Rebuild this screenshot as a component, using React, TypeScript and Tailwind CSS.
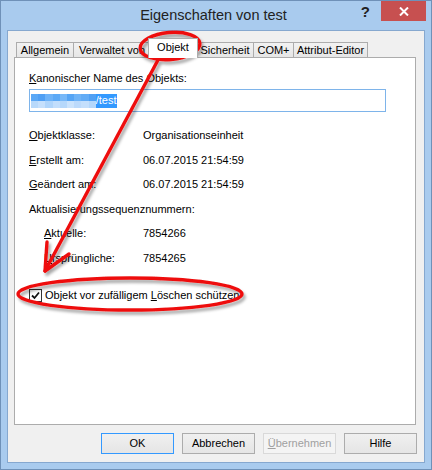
import React from "react";

const Key = ({ c }: { c: string }) => <span className="underline underline-offset-[1px]">{c}</span>;

const tabs = [
  { label: "Allgemein", w: "w-[57px]" },
  { label: "Verwaltet von", w: "w-[77px]" },
  { label: "Objekt", w: "w-[46px]", active: true },
  { label: "Sicherheit", w: "w-[57px]" },
  { label: "COM+", w: "w-[40px]" },
  { label: "Attribut-Editor", w: "w-[75px]", last: true },
];

const blurTop = ["#5aa8f6", "#4f9ff4", "#6cb2f8", "#5ba9f6", "#77b8f8", "#56a5f5", "#6eb3f7", "#62acf6", "#4fa0f4"];
const blurBottom = ["#b8d9fb", "#c6e0fc", "#b0d5fb", "#c2defc", "#b6d8fb", "#cbe3fc", "#bcdafb", "#c4dffc", "#b4d7fb"];

function Row({ label, value, indent }: { label: React.ReactNode; value: string; indent?: boolean }) {
  return (
    <div className={`flex items-center h-[24.5px] ${indent ? "pl-[15px]" : ""}`}>
      <div className={indent ? "w-[99px]" : "w-[114px]"}>{label}</div>
      <div>{value}</div>
    </div>
  );
}

export default function App() {
  return (
    <div className="relative w-[432px] h-[470px] bg-[#a9cbee] border border-[#6f91b8] flex flex-col font-['Liberation_Sans',Arial,sans-serif] text-[11px] text-black select-none">
      {/* Title bar */}
      <div className="h-[29px] grid grid-cols-[1fr_auto_1fr] pr-[5px]">
        <div />
        <div className="flex items-center pt-[1px] text-[14.5px] text-[#222]">Eigenschaften von test</div>
        <div className="flex justify-end items-start">
          <span className="mt-[2px] mr-[11px] text-[15px] font-bold text-[#222] leading-[18px]">?</span>
          <div className="w-[45px] h-[20px] bg-[#c75050] flex items-center justify-center">
            <svg width="10" height="9" viewBox="0 0 10 9">
              <path d="M1 0.5 L9 8.5 M9 0.5 L1 8.5" stroke="#fff" strokeWidth="2" />
            </svg>
          </div>
        </div>
      </div>

      {/* Client area */}
      <div className="mx-[6px] border border-[#86a8cf] bg-[#f0f0f0] h-[433px] flex flex-col">
        <div className="pl-[6px] pr-[8px] pt-[7px]">
          {/* Tabs */}
          <div className="flex items-end h-[19px] pl-[2px]">
            {tabs.map((t) =>
              t.active ? (
                <div
                  key={t.label}
                  className="relative z-10 w-[50px] h-[20px] -mb-px -mx-[2px] bg-white border border-b-0 border-[#acacac] flex items-center justify-center pb-[2px]"
                >
                  {t.label}
                </div>
              ) : (
                <div
                  key={t.label}
                  className={`${t.w} h-[15px] border-t border-l ${t.last ? "border-r" : ""} border-[#acacac] bg-gradient-to-b from-[#f2f2f2] to-[#e6e6e6] flex items-center justify-center leading-none`}
                >
                  {t.label}
                </div>
              )
            )}
          </div>

          {/* Panel */}
          <div className="h-[368px] border border-[#acacac] bg-white pl-[14px] pt-[13px]">
            <div className="h-[14px] flex items-center">
              <span>
                <Key c="K" />anonischer Name des Objekts:
              </span>
            </div>
            <div className="mt-[4px] w-[357px] h-[23px] border border-[#7eb4ea] flex items-center pl-[1px]">
              <div className="flex flex-col">
                <div className="flex">
                  {blurTop.map((c, i) => (
                    <div key={i} className="w-[7.2px] h-[7px]" style={{ background: c }} />
                  ))}
                </div>
                <div className="flex">
                  {blurBottom.map((c, i) => (
                    <div key={i} className="w-[7.2px] h-[7px]" style={{ background: c }} />
                  ))}
                </div>
              </div>
              <div className="h-[14px] bg-[#3399ff] text-white flex items-center pr-[1px]">/test</div>
            </div>

            <div className="mt-[11px]">
              <Row label={<><Key c="O" />bjektklasse:</>} value="Organisationseinheit" />
              <Row label={<><Key c="E" />rstellt am:</>} value="06.07.2015 21:54:59" />
              <Row label={<><Key c="G" />eändert am:</>} value="06.07.2015 21:54:59" />
              <div className="flex items-center h-[24.5px]">Aktualisierungssequenznummern:</div>
              <Row indent label={<><Key c="A" />ktuelle:</>} value="7854266" />
              <Row indent label={<><Key c="U" />rsprüngliche:</>} value="7854265" />
            </div>

            <div className="mt-[18px] flex items-center h-[14px]">
              <div className="w-[13px] h-[13px] border border-[#333] bg-white flex items-center justify-center mr-[3px]">
                <svg width="9" height="9" viewBox="0 0 9 9">
                  <path d="M1 4.5 L3.5 7 L8 1.5" fill="none" stroke="#111" strokeWidth="1.8" />
                </svg>
              </div>
              <span>
                Objekt vor zufälligem <Key c="L" />öschen schützen
              </span>
            </div>
          </div>
        </div>

        {/* Buttons */}
        <div className="flex justify-end gap-[8px] pr-[7px] mt-[8px]">
          <button className="w-[73px] h-[21px] border border-[#3399ff] bg-gradient-to-b from-[#f0f0f0] to-[#e5e5e5]">OK</button>
          <button className="w-[73px] h-[21px] border border-[#acacac] bg-gradient-to-b from-[#f0f0f0] to-[#e5e5e5]">Abbrechen</button>
          <button className="w-[73px] h-[21px] border border-[#d9d9d9] bg-[#f4f4f4] text-[#a0a0a0]">
            <Key c="Ü" />bernehmen
          </button>
          <button className="w-[73px] h-[21px] border border-[#acacac] bg-gradient-to-b from-[#f0f0f0] to-[#e5e5e5]">Hilfe</button>
        </div>
      </div>

      {/* Red annotations */}
      <svg className="absolute -left-px -top-px pointer-events-none" width="432" height="470" viewBox="0 0 432 470">
        <defs>
          <filter id="sh" x="-20%" y="-20%" width="140%" height="140%">
            <feDropShadow dx="2" dy="3" stdDeviation="1.6" floodColor="#000" floodOpacity="0.35" />
          </filter>
        </defs>
        <g filter="url(#sh)" fill="none" stroke="#ee1111" strokeWidth="3.4" strokeLinecap="round" strokeLinejoin="round">
          <ellipse cx="170" cy="46" rx="30" ry="13.5" transform="rotate(-5 170 46)" />
          <line x1="158" y1="60" x2="45" y2="271" />
          <polyline points="69,254 45,271 47,242" />
          <ellipse cx="130" cy="294" rx="112" ry="16" />
        </g>
      </svg>
    </div>
  );
}
